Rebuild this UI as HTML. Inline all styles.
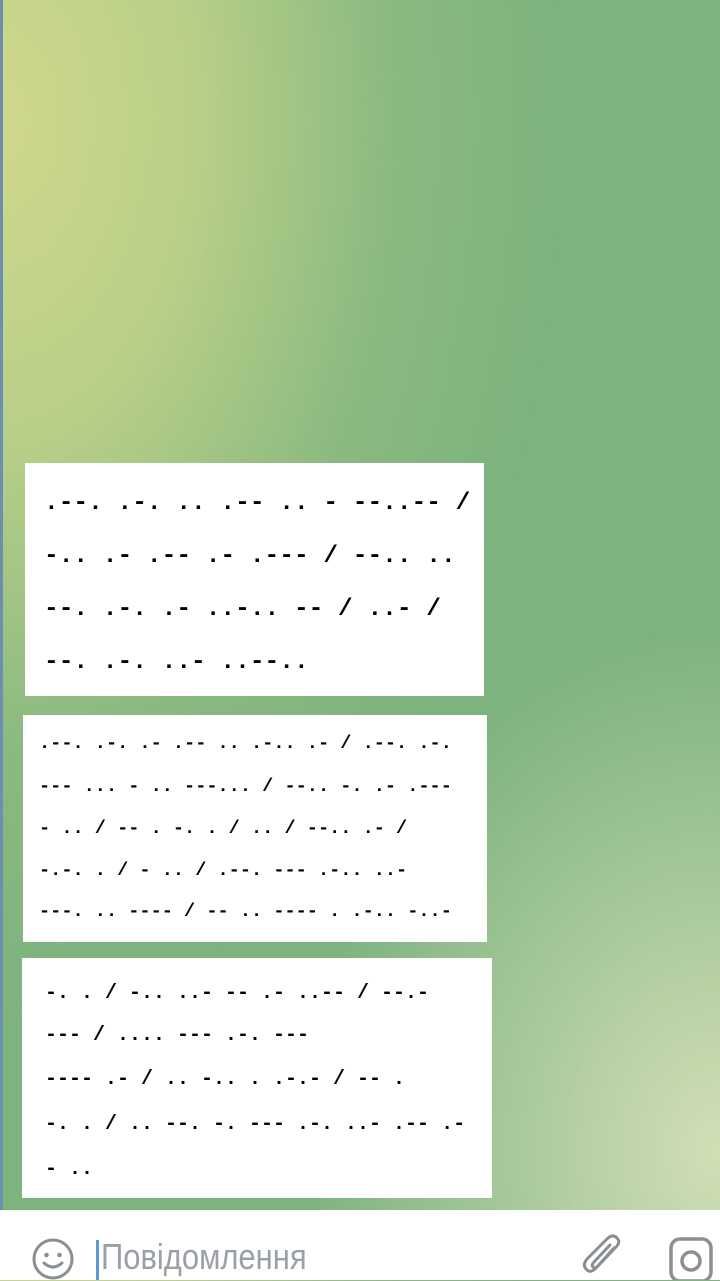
<!DOCTYPE html>
<html><head><meta charset="utf-8"><style>
html,body{margin:0;padding:0}
body{width:720px;height:1280px;position:relative;overflow:hidden;font-family:"Liberation Mono",monospace;
background:
radial-gradient(ellipse 420px 520px at 720px 1150px, rgba(215,225,185,0.95), rgba(215,225,185,0) 100%),
radial-gradient(ellipse 560px 900px at 0px 120px, rgba(208,216,140,1) 0%, rgba(195,212,138,0.85) 35%, rgba(160,196,132,0.4) 70%, rgba(125,179,126,0) 100%),
#7db37e;}
.strip{position:absolute;left:0;top:0;width:3px;height:1210px;background:#6c8fae}
.b{position:absolute;background:#fff}
.l{position:absolute;white-space:pre;color:#000;font-weight:bold}
.bar{position:absolute;left:0;top:1210px;width:720px;height:70px;background:#fff}
</style></head><body>
<div class="strip"></div>

<div class="b" style="left:25px;top:463px;width:459px;height:233px"></div>
<div class="l" style="left:44px;top:490px;font-size:24.5px">.--. .-. .. .-- .. - --..-- /</div>
<div class="l" style="left:44px;top:543px;font-size:24.5px">-.. .- .-- .- .--- / --.. ..</div>
<div class="l" style="left:44px;top:596px;font-size:24.5px">--. .-. .- ..-.. -- / ..- /</div>
<div class="l" style="left:44px;top:649px;font-size:24.5px">--. .-. ..- ..--..</div>

<div class="b" style="left:23px;top:715px;width:464px;height:227px"></div>
<div class="l" style="left:39px;top:733px;font-size:18.6px">.--. .-. .- .-- .. .-.. .- / .--. .-.</div>
<div class="l" style="left:39px;top:776px;font-size:18.6px">--- ... - .. ---... / --.. -. .- .---</div>
<div class="l" style="left:39px;top:818px;font-size:18.6px">- .. / -- . -. . / .. / --.. .- /</div>
<div class="l" style="left:39px;top:860px;font-size:18.6px">-.-. . / - .. / .--. --- .-.. ..-</div>
<div class="l" style="left:39px;top:901px;font-size:18.6px">---. .. ---- / -- .. ---- . .-.. -..-</div>

<div class="b" style="left:22px;top:958px;width:470px;height:240px"></div>
<svg style="position:absolute;left:12px;top:1180px" width="20" height="20"><path d="M10 18 Q14 14 14 2 L20 2 L20 18 Z" fill="#fff"/></svg>
<div class="l" style="left:45px;top:982px;font-size:20px">-. . / -.. ..- -- .- ..-- / --.-</div>
<div class="l" style="left:45px;top:1024px;font-size:20px">--- / .... --- .-. ---</div>
<div class="l" style="left:45px;top:1068px;font-size:20px">---- .- / .. -.. . .-.- / -- .</div>
<div class="l" style="left:45px;top:1113px;font-size:20px">-. . / .. --. -. --- .-. ..- .-- .-</div>
<div class="l" style="left:45px;top:1158px;font-size:20px">- ..</div>

<div class="bar"></div>
<svg style="position:absolute;left:31px;top:1237px" width="44" height="44"><circle cx="22" cy="22" r="19" fill="none" stroke="#8a8f94" stroke-width="3"/><circle cx="15.5" cy="18" r="2.3" fill="#8a8f94"/><circle cx="28.5" cy="18" r="2.3" fill="#8a8f94"/><path d="M13 26 Q22 34 31 26" fill="none" stroke="#8a8f94" stroke-width="3" stroke-linecap="round"/></svg>
<div style="position:absolute;left:96px;top:1240px;width:3px;height:40px;background:#5b9bd5"></div>
<div style="position:absolute;left:101px;top:1236px;font-family:'Liberation Sans',sans-serif;font-size:36px;color:#9aa0a6;transform:scaleX(0.86);transform-origin:left">Повідомлення</div>
<svg style="position:absolute;left:580px;top:1234px" width="46" height="46"><path d="M34 14 L16 34 Q10 40 6 35 Q2 30 8 24 L28 4 Q33 0 37 4 Q41 8 36 13 L18 32 Q15 35 13 33 Q11 31 14 28 L30 11" fill="none" stroke="#8a8f94" stroke-width="3" stroke-linecap="round"/></svg>
<svg style="position:absolute;left:668px;top:1236px" width="52" height="44"><rect x="3" y="3" width="40" height="42" rx="9" fill="none" stroke="#8a8f94" stroke-width="3.5"/><circle cx="23" cy="25" r="9" fill="none" stroke="#8a8f94" stroke-width="3.5"/></svg>
</body></html>
